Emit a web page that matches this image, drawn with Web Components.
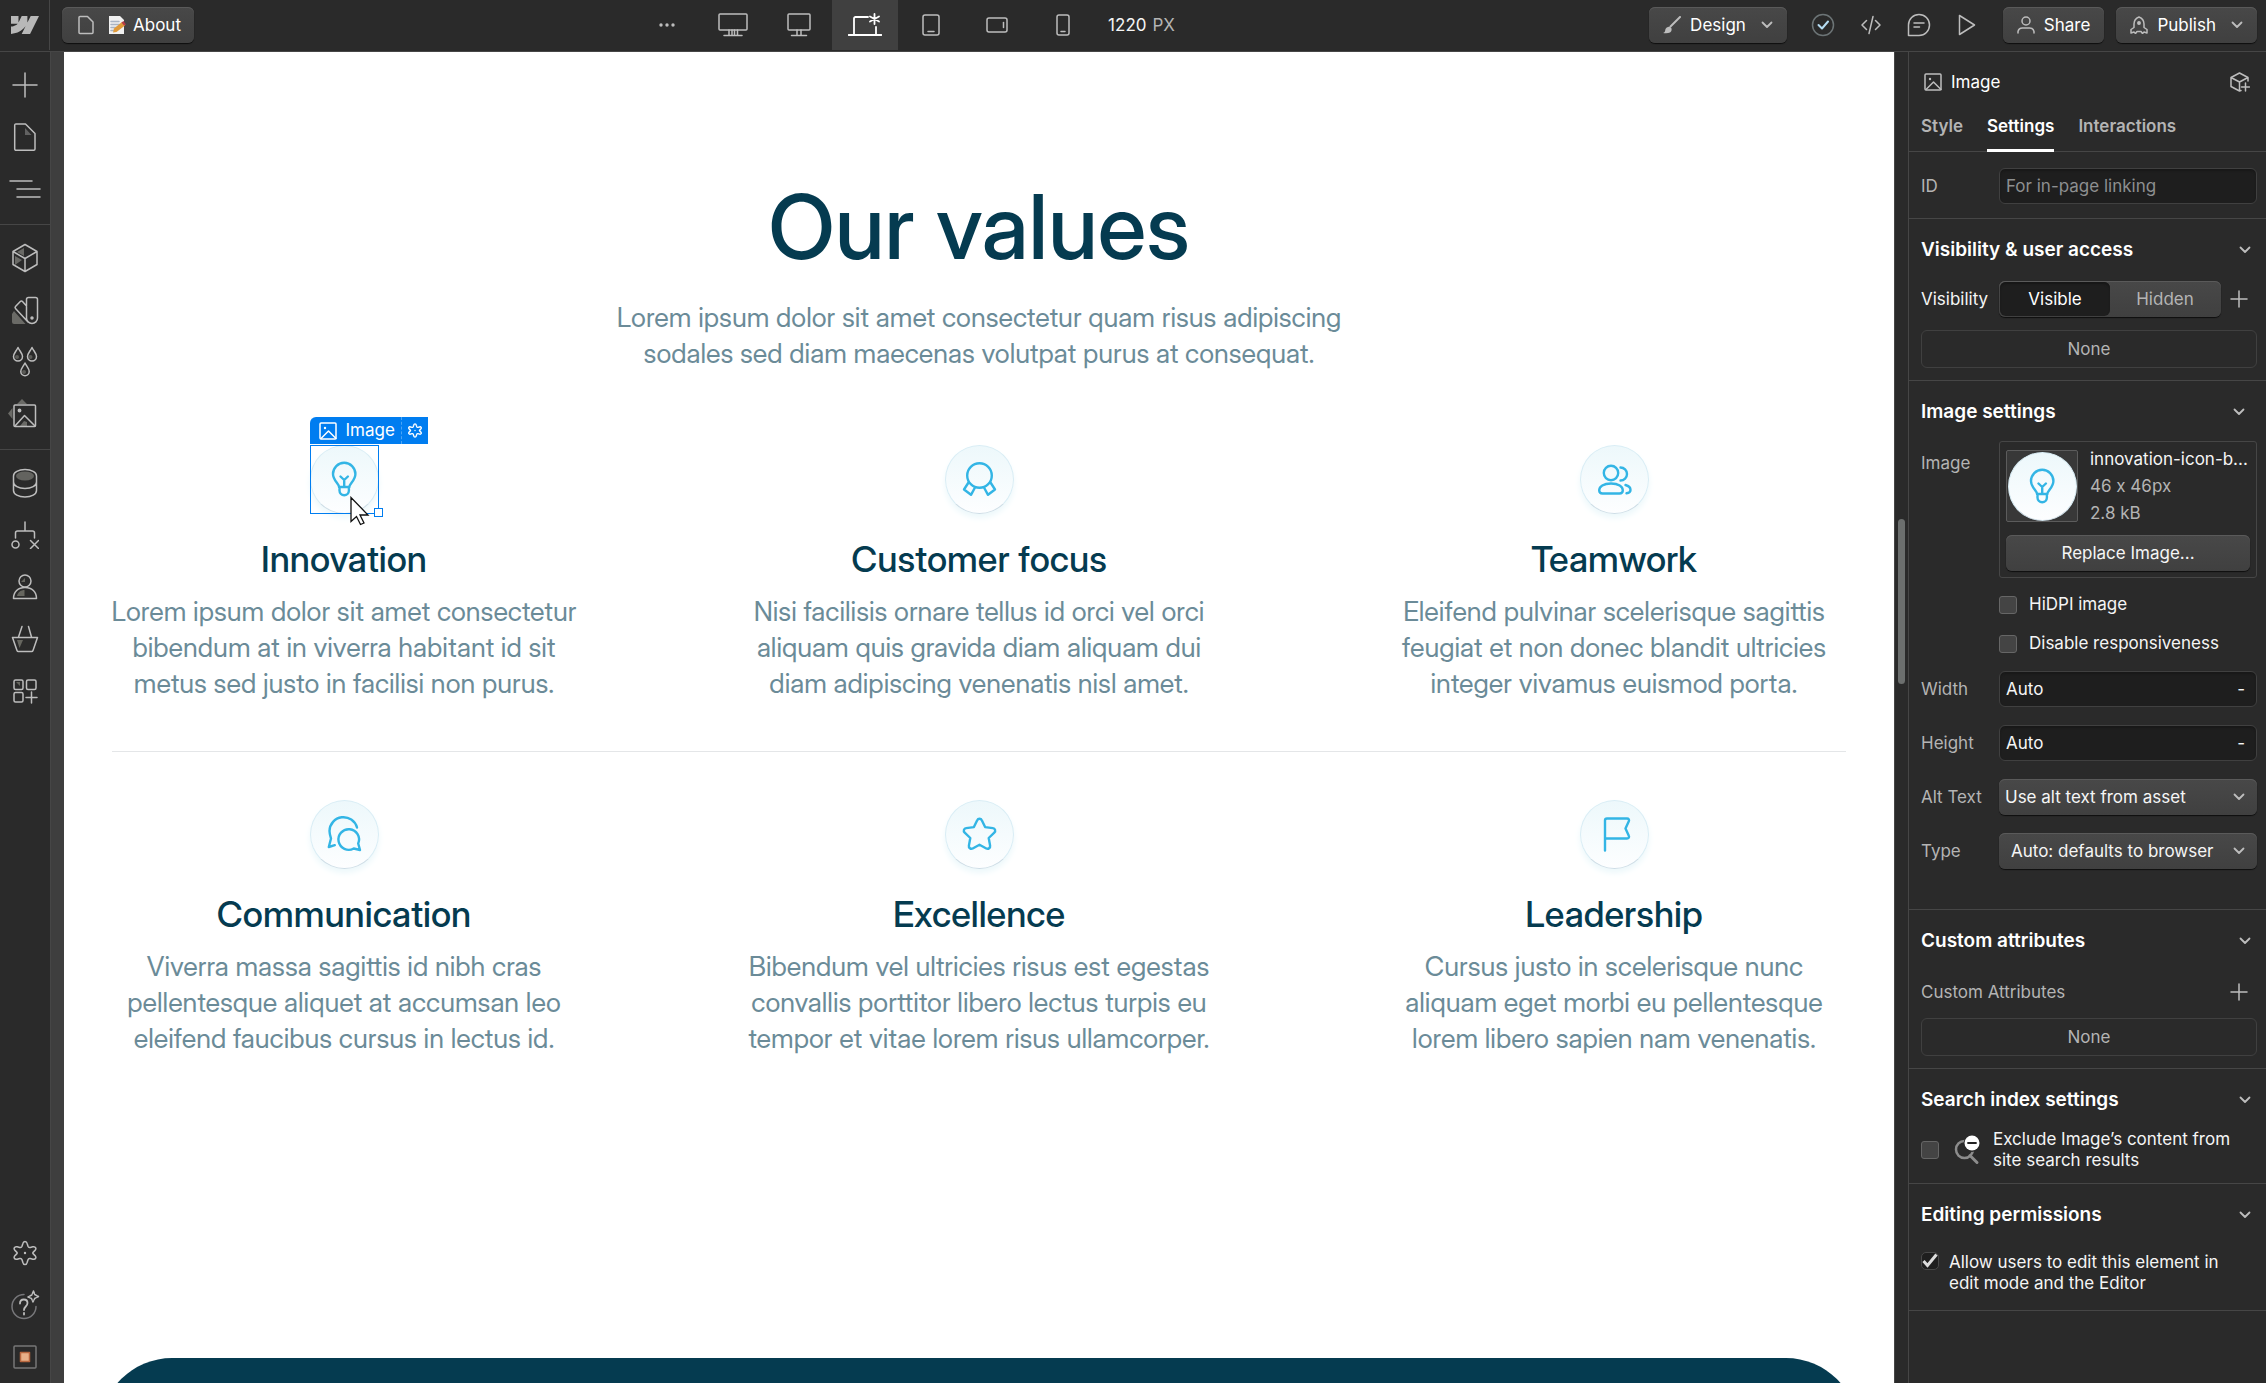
<!DOCTYPE html>
<html lang="en">
<head>
<meta charset="utf-8">
<meta name="viewport" content="width=device-width, initial-scale=1">
<title>About - Designer</title>
<style>
  :root {
    --bg: #2a2a2a;
    --bg-input: #1e1e1e;
    --line: #464646;
    --text: #f5f5f5;
    --muted: #b4b4b4;
    --icon: #bdbdbd;
    --button: linear-gradient(#484848, #404040);
    --button-shadow: inset 0 1px 0 #5a5a5a, 0 1px 1px #0e0e0e;
    --navy: #053b50;
    --slate: #6b8b98;
    --sky: #33b5e5;
    --blue: #007df0;
    --display: "Inter Display", Inter, "Liberation Sans", sans-serif;
  }

  body {
    margin: 0;
    background: var(--bg);
    color: var(--text);
    font: 400 17px/21px Inter, "Liberation Sans", sans-serif;
  }
</style>
</head>
<body>
<designer-app></designer-app>

<script>
// name: [width, height, markup]
const ICONS = {
  logo: [28, 18, '<path transform="scale(1.167 1.2) translate(0 -4.515)" fill="currentColor" stroke="none" d="m24 4.515-7.658 14.97H9.149l3.205-6.204h-.144C9.566 16.713 5.621 18.973 0 19.485v-6.118s3.596-.213 5.71-2.435H0V4.515h6.417v5.278l.144-.001 2.622-5.277h4.854v5.244h.144l2.72-5.244H24Z"/>'],
  file: [18, 20, '<path d="M3 1.500h7.500L16 7v10.500a1 1 0 0 1-1 1H3a1 1 0 0 1-1-1v-15a1 1 0 0 1 1-1z"/>'],
  memo: [18, 20, '<path fill="#f1f1f1" stroke="none" d="M1 1h11l4 4v14H1z"/><path stroke="#a9b4c4" d="M3 6.500h8M3 9.500h10M3 12.500h6M3 15.500h3"/><path fill="#e09a3a" stroke="none" d="M5 17.500l1-4 8-6.500 3 3.500-8.500 6.500z"/><path fill="#b53a48" stroke="none" d="M13.500 7.500l2-1.500 2.500 3.500-2 1z"/>'],
  dots: [16, 4, '<g fill="currentColor" stroke="none"><circle cx="2" cy="2" r="1.700"/><circle cx="8" cy="2" r="1.700"/><circle cx="14" cy="2" r="1.700"/></g>'],
  desktopLarge: [30, 24, '<rect x="1" y="1" width="28" height="16" rx="1"/><path d="M11 17v5M14 17v5M16.500 17v5M19.500 17v5M6 22.500h18"/>'],
  desktop: [24, 24, '<rect x="1" y="1" width="22" height="16" rx="1"/><path d="M10 17v5M14 17v5M4.500 22.500h15"/>'],
  laptop: [34, 24, '<g stroke-width="1.800"><path d="M6 22V5.500A1.500 1.500 0 0 1 7.500 4H20M28 14v8M.500 22h33"/><path d="M26.500 1v10M22 3.500l9 5M31 3.500l-9 5"/></g>'],
  tablet: [18, 22, '<rect x="1" y="1" width="16" height="20" rx="2"/><path d="M6 17.500h6"/>'],
  phoneWide: [22, 16, '<rect x="1" y="1" width="20" height="14" rx="2"/><path d="M17.500 5.500v5"/>'],
  phone: [14, 22, '<rect x="1" y="1" width="12" height="20" rx="2"/><path d="M5 17.500h4"/>'],
  brush: [18, 18, '<path fill="currentColor" stroke="none" d="M0 17c2-.500 2-1.500 2.500-4A3.600 3.600 0 0 1 8 11.500a3.500 3.500 0 0 1-1 5C5 17.500 2 17.300 0 17z"/><path stroke-width="2" d="M7.500 10.500L17 1"/>'],
  chevron: [12, 8, '<path stroke-width="1.800" d="M1.500 1.500L6 6l4.500-4.500"/>'],
  check: [24, 24, '<circle cx="12" cy="12" r="10.500" stroke="#6c7476"/><path stroke="#b5dcf2" stroke-width="2" d="M7.500 12l3.500 3.500 6-7"/>'],
  code: [20, 20, '<path d="M5.500 5.500L1 10l4.500 4.500M14.500 5.500L19 10l-4.500 4.500M12 1.500L8 18.500"/>'],
  comment: [24, 24, '<path d="M1.500 22.500V12A10.500 10.500 0 1 1 12 22.500zM7 10h10M7 14h5.500"/>'],
  play: [18, 22, '<path d="M1.500 1.500v19L16.500 11z"/>'],
  person: [18, 18, '<circle cx="9" cy="5" r="4"/><path d="M1 17v-1.500A4.500 4.500 0 0 1 5.500 12h7a4.500 4.500 0 0 1 4.500 3.500V17"/>'],
  rocket: [18, 18, '<path d="M4 11.500V8c0-3.500 2.500-6 5-7 2.500 1 5 3.500 5 7v3.500l3 2v3.500l-3-1-1.500 1.500-1.500-2H7l-1.500 2L4 16l-3 1v-3.500z"/><circle cx="9" cy="7" r="1.200" fill="currentColor"/>'],
  add: [26, 26, '<path d="M13 1v24M1 13h24"/>'],
  plus: [18, 18, '<path d="M9 1v16M1 9h16"/>'],
  page: [24, 28, '<path fill="#626262" stroke="none" d="M12 5v7h6.500z"/><path d="M3 1h9.500L22 10.500V26a1.200 1.200 0 0 1-1.200 1.200H3A1.200 1.200 0 0 1 1.700 26V2.200A1.200 1.200 0 0 1 3 1z"/>'],
  navigator: [32, 20, '<path d="M1 2h22M8 10h23M8 18h23"/>'],
  cube: [28, 30, '<path fill="#6a6a66" stroke="none" d="M13 5v8L6 9zM4 13l7 4-7 5z"/><path d="M14 1.500l12 7v13l-12 7-12-7v-13zM2 8.500l12 7 12-7M14 15.500v13"/>'],
  swatches: [28, 30, '<path fill="#6a6a66" stroke="none" d="M1 19l2-3 11.500 13H3a2 2 0 0 1-2-2z"/><path d="M17.500 2.500h7a2 2 0 0 1 2 2V23a5.500 5.500 0 0 1-11 0V4.500a2 2 0 0 1 2-2zM15.500 11l-4-4.500a1.500 1.500 0 0 0-2.200 0L4.500 11.500a1.500 1.500 0 0 0 0 2L17 27"/><circle cx="21" cy="23" r="1" fill="currentColor"/>'],
  drops: [26, 32, '<g fill="#5c5c58" stroke="none"><circle cx="5" cy="11" r="2"/><circle cx="18.500" cy="11" r="2"/><circle cx="12" cy="26" r="2"/></g><path d="M6 1.500c2 4 4.500 6 4.500 9a4.500 4.500 0 0 1-9 0c0-3 2.500-5 4.500-9zM20 1.500c2 4 4.500 6 4.500 9a4.500 4.500 0 0 1-9 0c0-3 2.500-5 4.500-9zM13 17c2 4 4.200 5.500 4.200 8.500a4.200 4.200 0 0 1-8.400 0c0-3 2.200-4.500 4.200-8.500z"/>'],
  assets: [34, 30, '<path fill="#6a6a66" stroke="none" d="M9 5l5-5 5 5zM4.500 9L0 14.500l4.500 5.500zM12 27l4-5 3 1v4z"/><rect x="6" y="6" width="21.500" height="21.500" rx="1"/><path d="M7 27l9.500-10.500L27 27"/><circle cx="11.500" cy="11.500" r="1.200" fill="currentColor"/>'],
  database: [26, 30, '<ellipse cx="13" cy="8" rx="9" ry="4.500" fill="#63635f" stroke="none"/><path d="M1.500 8v14.500c0 3.800 5 6.500 11.500 6.500s11.500-2.700 11.500-6.500V8M1.500 8c0-3.800 5-6.500 11.500-6.500S24.500 4.200 24.500 8M1.500 14c0 3.800 5 6.500 11.500 6.500s11.500-2.700 11.500-6.500"/>'],
  logic: [28, 28, '<path d="M14 1v9M4.500 17v-5a2 2 0 0 1 2-2h15a2 2 0 0 1 2 2v5M19.500 19.500l8 8M27.500 19.500l-8 8"/><circle cx="4.500" cy="23.500" r="3.500"/>'],
  user: [26, 26, '<path fill="#66665f" stroke="none" d="M5 22c1-4 4-6 7.500-6v6zM9 8l4-4v4z"/><circle cx="13" cy="7" r="6"/><path d="M1.500 24.500C1.500 18 6 13.500 13 13.500S24.500 18 24.500 24.500z"/>'],
  basket: [28, 28, '<path fill="#66665f" stroke="none" d="M6 15h6l-3.500 8z"/><path d="M1.500 12.500h25l-4.500 13a1.500 1.500 0 0 1-1.500 1H7.500a1.500 1.500 0 0 1-1.500-1zM7.500 12L11 1.500M20.500 12L17.500 1.500"/>'],
  apps: [26, 26, '<path fill="#66665f" stroke="none" d="M4 4h4v4z"/><rect x="2" y="2" width="9" height="9.500" rx="1.500"/><rect x="14.500" y="2" width="9.500" height="9.500" rx="1.500"/><rect x="2" y="14.500" width="9" height="9.500" rx="1.500"/><path d="M19.500 14v11M14 19.500h11"/>'],
  gear: [24, 26, '<path d="M12 1.500c1.500 0 1.900.900 2.200 2.200l.8 2.600c.400 1.200 1.200 1.500 2.300 1.200l2.500-.700c1.300-.300 2.400 0 2.900 1s.100 1.700-.700 2.600l-1.700 1.700c-.700.700-.700 1.100 0 1.800l1.700 1.700c.800.900 1.200 1.600.700 2.600s-1.600 1.300-2.900 1l-2.500-.700c-1.100-.300-1.900 0-2.300 1.200l-.8 2.600c-.300 1.300-.700 2.200-2.200 2.200s-1.900-.900-2.200-2.200L9 19.700c-.400-1.200-1.200-1.500-2.300-1.200l-2.500.700c-1.300.300-2.400 0-2.900-1s-.100-1.700.700-2.600l1.700-1.700c.700-.700.700-1.100 0-1.800L2 10.400c-.800-.9-1.200-1.600-.7-2.600s1.600-1.300 2.900-1l2.500.7C7.800 7.800 8.600 7.500 9 6.300l.8-2.600c.3-1.300.7-2.200 2.200-2.200z"/><circle cx="12" cy="13" r="1.200" fill="currentColor" stroke="none"/>'],
  help: [30, 30, '<path stroke="#77777a" d="M14 4.500a12 12 0 1 0 12 12"/><path stroke-width="1.800" d="M10 13.500c0-2.300 1.500-4 3.800-4s3.700 1.500 3.700 3.500c0 3.500-3.500 3.500-3.500 7M14 23v1.500"/><path d="M23.500 1l1.200 3.500L28.500 6.500l-3.800 2L23 12l-1.500-3.500L18 7l3.800-2z" stroke-dasharray="2.500 1.200"/>'],
  record: [24, 24, '<rect x="1" y="1" width="22" height="22" rx="1" stroke="#777"/><rect x="7.500" y="7.500" width="9" height="9" fill="#e8b088" stroke="#b8673f"/>'],
  image: [18, 18, '<rect x="1" y="1" width="16" height="16" rx="1"/><path d="M2 16.500l7.500-7.500L17 16.500"/><circle cx="6" cy="6" r="1.200" fill="currentColor" stroke="none"/>'],
  cubePlus: [20, 20, '<path d="M18 9V5.500L9.500 1 1 5.500v9L9.500 19l1.500-.500M1 5.500L9.500 10 18 5.500M9.500 10v9M15.500 11v8M11.500 15h8"/>'],
  searchMinus: [28, 30, '<circle cx="11.500" cy="14.500" r="8.500" stroke="#8c8c8c" stroke-width="2.500"/><path stroke="#8c8c8c" stroke-width="3" d="M17 20.500l7 7"/><circle cx="19" cy="8.500" r="8.500" fill="#2a2a2a" stroke="none"/><circle cx="19" cy="8" r="7.500" fill="#fff" stroke="none"/><path stroke="#222" stroke-width="1.800" d="M15 8h8"/>'],
  cursor: [22, 30, '<path fill="#fff" stroke="#111" stroke-width="1.300" stroke-linejoin="miter" d="M2 1.500v24l5.500-5 4 8 3.500-1.500-4-8h8z"/>']
};

// Glyphs inside the round badges, drawn in a 69px circle
const GLYPHS = {
  bulb: '<path d="M29 42c0-3.500-6-6.500-6-13a11.200 11.200 0 0 1 22.400 0c0 6.500-6 9.500-6 13zM29.500 42.500v3a4.700 4.700 0 0 0 9.400 0v-3M30.500 31.500l3.700 3.500 3.700-3.500M34.200 35v7"/>',
  award: '<circle cx="34.500" cy="30.500" r="12.300"/><path d="M23.500 37.500L19 44.500l7 5.300 4-7.300M45.500 37.500l4.500 7-7 5.300-4-7.300"/>',
  team: '<circle cx="31" cy="28" r="7.200"/><path d="M40.500 22.500a6.500 6.500 0 0 1 0 13M31 38.500c7.500 0 11.800 3 11.800 6.800 0 2-1.300 3.200-3.300 3.200h-17c-2 0-3.300-1.200-3.300-3.200 0-3.800 4.300-6.800 11.800-6.800zM45.500 40c3 .8 5 2.800 5 5 0 1.800-1.500 3-4 3.300"/>',
  chat: '<path d="M47 27.500A14 14 0 0 0 19.500 31c0 2.500.8 5 1.500 7.500L18.800 47l6-1.800"/><path d="M50 50l-1.800-6.500a10.300 10.300 0 1 0-4.500 5z"/>',
  star: '<path d="M32.200 20.200c.9-2 3.700-2 4.600 0l3.300 6.900 7.700 1c2.300.3 3.200 3 1.500 4.600l-5.600 5.300 1.400 7.600c.4 2.200-1.800 3.900-3.800 2.900l-6.800-3.700-6.800 3.700c-2 1-4.200-.7-3.800-2.900l1.400-7.600-5.600-5.300c-1.700-1.600-.8-4.300 1.500-4.600l7.700-1z"/>',
  flag: '<path d="M25 50.500v-30a2 2 0 0 1 2-2h20c1.700 0 2.500 1.400 1.800 2.800L45.500 28.500l3.300 7.200c.7 1.400-.1 2.800-1.800 2.800H25"/>'
};

const icon = (name) => {
  const [w, h, markup] = ICONS[name];
  return `<svg width="${w}" height="${h}" viewBox="0 0 ${w} ${h}" fill="none" stroke="currentColor" stroke-width="1.5" stroke-linecap="round" stroke-linejoin="round" aria-hidden="true">${markup}</svg>`;
};

const glyph = (name) =>
  `<svg viewBox="0 0 69 69" fill="none" stroke="#33b5e5" stroke-width="2.4" stroke-linecap="round" stroke-linejoin="round" aria-hidden="true">${GLYPHS[name]}</svg>`;

const BASE = `
  :host, *, *::before, *::after { box-sizing: border-box; }
  svg { display: block; flex: none; }
  button, input, select { font: inherit; color: inherit; margin: 0; padding: 0; border: 0; background: none; }
  button { cursor: pointer; }
  .raised { background: var(--button); box-shadow: var(--button-shadow); border-radius: 6px; }
`;

class BaseElement extends HTMLElement {
  constructor() {
    super();
    this.attachShadow({ mode: 'open' });
  }

  connectedCallback() {
    this.shadowRoot.innerHTML = `<style>${BASE}${this.styles()}</style>${this.template()}`;
  }

  styles() { return ''; }
  template() { return '<slot></slot>'; }
}

class IconButton extends BaseElement {
  styles() {
    return `
      :host { display: flex; width: 48px; height: 52px; color: var(--icon); }
      :host([active]) { color: #fff; background: #404040; }
      button { flex: 1; display: flex; align-items: center; justify-content: center; }
    `;
  }

  template() {
    return `<button type="button" aria-label="${this.getAttribute('label')}">${icon(this.getAttribute('icon'))}</button>`;
  }
}

class MenuButton extends BaseElement {
  styles() {
    return `
      :host { display: block; }
      button { display: flex; align-items: center; gap: 9px; height: 36px; padding: 0 14px; color: var(--icon); }
      span { color: #fff; }
      .caret { margin-left: 6px; }
    `;
  }

  template() {
    return `
      <button type="button" class="raised">
        ${icon(this.getAttribute('icon'))}
        <span><slot></slot></span>
        ${this.hasAttribute('menu') ? `<div class="caret">${icon('chevron')}</div>` : ''}
      </button>
    `;
  }
}

class TopBar extends BaseElement {
  styles() {
    return `
      :host { display: flex; justify-content: space-between; align-items: flex-start; height: 52px; border-bottom: 1px solid var(--line); background: var(--bg); }
      .group { display: flex; align-items: center; height: 50px; }
      .home { display: flex; align-items: center; justify-content: center; width: 50px; height: 50px; border-right: 1px solid var(--line); color: #b8b8b8; }
      .crumb { display: flex; align-items: center; gap: 13px; height: 36px; margin-left: 12px; padding: 0 13px 0 15px; color: var(--icon); }
      .crumb span { display: flex; align-items: center; gap: 7px; color: #fff; }
      .devices icon-button { width: 66px; height: 50px; }
      .size { display: flex; gap: 6px; padding: 0 34px 0 12px; }
      .size span { color: var(--muted); }
      .actions { gap: 12px; padding-right: 9px; }
      .tools { display: flex; }
    `;
  }

  template() {
    return `
      <div class="group">
        <a class="home" href="#" aria-label="Home">${icon('logo')}</a>
        <button type="button" class="crumb raised">${icon('file')}<span>${icon('memo')}About</span></button>
      </div>
      <div class="group devices">
        <icon-button icon="dots" label="More breakpoints"></icon-button>
        <icon-button icon="desktopLarge" label="Large desktop"></icon-button>
        <icon-button icon="desktop" label="Desktop"></icon-button>
        <icon-button icon="laptop" label="Base breakpoint" active></icon-button>
        <icon-button icon="tablet" label="Tablet"></icon-button>
        <icon-button icon="phoneWide" label="Mobile landscape"></icon-button>
        <icon-button icon="phone" label="Mobile portrait"></icon-button>
        <div class="size">1220 <span>PX</span></div>
      </div>
      <div class="group actions">
        <menu-button icon="brush" menu>Design</menu-button>
        <div class="tools">
          <icon-button icon="check" label="Saved"></icon-button>
          <icon-button icon="code" label="Export code"></icon-button>
          <icon-button icon="comment" label="Comments"></icon-button>
          <icon-button icon="play" label="Preview"></icon-button>
        </div>
        <menu-button icon="person">Share</menu-button>
        <menu-button icon="rocket" menu>Publish</menu-button>
      </div>
    `;
  }
}

class SideRail extends BaseElement {
  styles() {
    return `
      :host { display: flex; flex-direction: column; flex: none; width: 51px; border-right: 1px solid var(--line); background: var(--bg); }
      nav { padding: 7px 0 9px; border-bottom: 1px solid var(--line); }
      nav:first-child { padding-top: 6px; }
      nav.last { border: 0; }
      icon-button { width: 50px; }
      .bottom { margin-top: auto; }
    `;
  }

  template() {
    return `
      <nav>
        <icon-button icon="add" label="Add"></icon-button>
        <icon-button icon="page" label="Pages"></icon-button>
        <icon-button icon="navigator" label="Navigator"></icon-button>
      </nav>
      <nav>
        <icon-button icon="cube" label="Components"></icon-button>
        <icon-button icon="swatches" label="Variables"></icon-button>
        <icon-button icon="drops" label="Style selectors"></icon-button>
        <icon-button icon="assets" label="Assets"></icon-button>
      </nav>
      <nav class="last">
        <icon-button icon="database" label="CMS"></icon-button>
        <icon-button icon="logic" label="Logic"></icon-button>
        <icon-button icon="user" label="Users"></icon-button>
        <icon-button icon="basket" label="Ecommerce"></icon-button>
        <icon-button icon="apps" label="Apps"></icon-button>
      </nav>
      <div class="bottom">
        <icon-button icon="gear" label="Settings"></icon-button>
        <icon-button icon="help" label="Help"></icon-button>
        <icon-button icon="record" label="Record"></icon-button>
      </div>
    `;
  }
}

class RoundBadge extends BaseElement {
  styles() {
    return `
      :host { display: block; width: 69px; height: 69px; border-radius: 50%; border: 1px solid #d9edf5; border-bottom-color: #cddde6; background: linear-gradient(#edf8fb, #fdfeff); box-shadow: 0 4px 6px #ecf8fb; }
      svg { width: 69px; height: 69px; margin: -1px; }
    `;
  }

  template() {
    return glyph(this.getAttribute('glyph'));
  }
}

class ElementOutline extends BaseElement {
  styles() {
    return `
      :host { display: block; position: relative; }
      .frame { position: absolute; inset: 0; border: 1px solid var(--blue); }
      .tag { position: absolute; left: 0; bottom: 100%; display: flex; height: 27px; margin-bottom: 1px; border-radius: 6px 0 0 0; background: var(--blue); color: #fff; }
      .name { display: flex; align-items: center; gap: 9px; padding: 0 6px 0 9px; }
      .tag button { display: flex; align-items: center; justify-content: center; width: 27px; border-left: 1px dashed #4aa4f5; }
      .tag button svg { width: 14px; height: 15px; stroke-width: 2.5; }
      .handle { position: absolute; right: -4px; bottom: -3px; width: 9px; height: 9px; border: 1px solid var(--blue); background: #fff; }
      .cursor { position: absolute; left: 39px; top: 51px; }
    `;
  }

  template() {
    return `
      <slot></slot>
      <div class="frame"></div>
      <div class="tag">
        <div class="name">${icon('image')}Image</div>
        <button type="button" aria-label="Image settings">${icon('gear')}</button>
      </div>
      <div class="handle"></div>
      <div class="cursor">${icon('cursor')}</div>
    `;
  }
}

class ValueCard extends BaseElement {
  styles() {
    return `
      :host { display: flex; flex-direction: column; align-items: center; text-align: center; font-family: var(--display); }
      element-outline { font-family: Inter, "Liberation Sans", sans-serif; }
      h3 { margin: 23px 0 13px; color: var(--navy); font-weight: 500; font-size: 36px; line-height: 44px; }
      p { margin: 0 -6px; color: var(--slate); font-size: 27px; line-height: 36px; }
    `;
  }

  template() {
    const badge = `<round-badge glyph="${this.getAttribute('glyph')}"></round-badge>`;
    return `
      ${this.hasAttribute('selected') ? `<element-outline>${badge}</element-outline>` : badge}
      <h3>${this.getAttribute('heading')}</h3>
      <p><slot></slot></p>
    `;
  }
}

class PageCanvas extends BaseElement {
  styles() {
    return `
      :host { display: flex; flex-direction: column; flex: 1; min-width: 0; overflow: hidden; margin-left: 13px; background: #fff; }
      section { padding: 127px 48px 301px; }
      header { display: flex; flex-direction: column; align-items: center; text-align: center; margin-bottom: 73px; font-family: var(--display); }
      h2 { margin: 0 0 25px; color: var(--navy); font-weight: 500; font-size: 89px; line-height: 96px; }
      header p { max-width: 740px; margin: 0; color: var(--slate); font-size: 27px; line-height: 36px; }
      .row { display: grid; grid-template-columns: repeat(3, 1fr); gap: 171px; padding-bottom: 49px; }
      .row + .row { padding: 48px 0 0; border-top: 1px solid #e4e6e8; }
      footer { flex: none; height: 400px; margin: 0 36px; border-radius: 72px 72px 0 0; background: var(--navy); }
    `;
  }

  template() {
    return `
      <section>
        <header>
          <h2>Our values</h2>
          <p>Lorem ipsum dolor sit amet consectetur quam risus adipiscing sodales sed diam maecenas volutpat purus at consequat.</p>
        </header>
        <div class="row">
          <value-card glyph="bulb" heading="Innovation" selected>Lorem ipsum dolor sit amet consectetur bibendum at in viverra habitant id sit metus sed justo in facilisi non purus.</value-card>
          <value-card glyph="award" heading="Customer focus">Nisi facilisis ornare tellus id orci vel orci aliquam quis gravida diam aliquam dui diam adipiscing venenatis nisl amet.</value-card>
          <value-card glyph="team" heading="Teamwork">Eleifend pulvinar scelerisque sagittis feugiat et non donec blandit ultricies integer vivamus euismod porta.</value-card>
        </div>
        <div class="row">
          <value-card glyph="chat" heading="Communication">Viverra massa sagittis id nibh cras pellentesque aliquet at accumsan leo eleifend faucibus cursus in lectus id.</value-card>
          <value-card glyph="star" heading="Excellence">Bibendum vel ultricies risus est egestas convallis porttitor libero lectus turpis eu tempor et vitae lorem risus ullamcorper.</value-card>
          <value-card glyph="flag" heading="Leadership">Cursus justo in scelerisque nunc aliquam eget morbi eu pellentesque lorem libero sapien nam venenatis.</value-card>
        </div>
      </section>
      <footer></footer>
    `;
  }
}

class CanvasScrollbar extends BaseElement {
  styles() {
    return `
      :host { display: flex; flex-direction: column; align-items: center; flex: none; width: 14px; border-left: 1px solid var(--line); background: var(--bg); }
      .before { flex: 467; }
      .thumb { flex: 165; width: 7px; border-radius: 4px; background: #6c6f6e; }
      .after { flex: 699; }
    `;
  }

  template() {
    return '<div class="before"></div><div class="thumb"></div><div class="after"></div>';
  }
}

class PanelSection extends BaseElement {
  styles() {
    return `
      :host { display: block; padding: 0 9px 12px 12px; border-bottom: 1px solid var(--line); }
      h3 { display: flex; align-items: center; justify-content: space-between; height: 60px; margin: 0; padding: 2px 6px 0 0; color: #fff; font-weight: 600; font-size: 19px; line-height: 24px; }
      :host([inset]) h3 { padding-right: 12px; }
      h3 button { color: var(--icon); }
    `;
  }

  template() {
    const heading = this.getAttribute('heading');
    return `
      <h3>${heading}<button type="button" aria-label="Toggle ${heading.replace('&', 'and')}">${icon('chevron')}</button></h3>
      <slot></slot>
    `;
  }
}

const FIELD = `
  :host { display: grid; grid-template-columns: 78px minmax(0, 1fr); align-items: center; }
  label { color: var(--muted); }
  .box { display: flex; align-items: center; height: 36px; padding: 0 11px 0 6px; border: 1px solid #404040; border-radius: 6px; background: var(--bg-input); box-shadow: inset 0 2px 2px #191919; }
  input { flex: 1; min-width: 0; outline: 0; }
  input::placeholder { color: #8d8f90; opacity: 1; }
`;

class TextField extends BaseElement {
  styles() { return FIELD; }

  template() {
    const unit = this.getAttribute('unit');
    return `
      <label for="control">${this.getAttribute('label')}</label>
      <div class="box">
        <input id="control" type="text" value="${this.getAttribute('value') || ''}" placeholder="${this.getAttribute('placeholder') || ''}">
        ${unit ? `<button type="button" aria-label="Unit">${unit}</button>` : ''}
      </div>
    `;
  }
}

class SelectField extends BaseElement {
  styles() {
    return `${FIELD}
      .wrap { display: grid; grid-template-columns: minmax(0, 1fr); align-items: center; height: 36px; }
      select { grid-area: 1 / 1; width: 100%; height: 36px; padding: 0 30px 0 6px; appearance: none; outline: 0; }
      :host([indent]) select { padding-left: 12px; }
      svg { grid-area: 1 / 1; justify-self: end; margin-right: 12px; color: var(--icon); pointer-events: none; }
    `;
  }

  template() {
    return `
      <label for="control">${this.getAttribute('label')}</label>
      <div class="wrap raised">
        <select id="control"><option>${this.getAttribute('value')}</option></select>
        ${icon('chevron')}
      </div>
    `;
  }
}

class CheckField extends BaseElement {
  styles() {
    return `
      :host { display: block; }
      label { display: flex; align-items: center; gap: 12px; }
      :host([top]) label { align-items: flex-start; gap: 10px; }
      input { appearance: none; flex: none; width: 18px; height: 18px; border: 1px solid #666; border-radius: 3px; background: #444; }
      input:checked { border-color: #484848; border-radius: 5px; background: #1e1e1e; }
      .tick { display: grid; }
      .tick > * { grid-area: 1 / 1; }
      .tick svg { display: none; pointer-events: none; }
      input:checked + svg { display: block; }
      .lead { padding: 0 0 0 2px; }
    `;
  }

  template() {
    const lead = this.getAttribute('icon');
    return `
      <label>
        <span class="tick">
          <input type="checkbox" ${this.hasAttribute('checked') ? 'checked' : ''}>
          <svg width="18" height="18" viewBox="0 0 18 18" fill="none" stroke="#dcdcdc" stroke-width="3"><path d="M2.500 9l4 4.500L15.500 2.500"/></svg>
        </span>
        ${lead ? `<span class="lead">${icon(lead)}</span>` : ''}
        <span><slot></slot></span>
      </label>
    `;
  }
}

class VisibilityField extends BaseElement {
  styles() {
    return `
      :host { display: grid; grid-template-columns: 78px 1fr 36px; align-items: center; }
      .toggle { display: grid; grid-template-columns: 1fr 1fr; height: 36px; padding: 1px; }
      .toggle button { border-radius: 6px; color: var(--muted); }
      .toggle button[aria-pressed="true"] { background: var(--bg-input); box-shadow: inset 0 2px 2px #171717; color: #fff; }
      .add { display: flex; justify-content: center; color: var(--icon); }
    `;
  }

  template() {
    return `
      <span id="name">Visibility</span>
      <div class="toggle raised" role="group" aria-labelledby="name">
        <button type="button" aria-pressed="true">Visible</button>
        <button type="button" aria-pressed="false">Hidden</button>
      </div>
      <button type="button" class="add" aria-label="Add condition">${icon('plus')}</button>
    `;
  }
}

class EmptyBox extends BaseElement {
  styles() {
    return ':host { display: flex; align-items: center; justify-content: center; height: 38px; border: 1px solid #404040; border-radius: 6px; color: var(--muted); }';
  }
}

class ImageField extends BaseElement {
  styles() {
    return `
      :host { display: grid; grid-template-columns: 78px minmax(0, 1fr); }
      .label { padding-top: 12px; color: var(--muted); }
      .card { padding: 8px 6px 6px; border: 1px solid var(--line); border-radius: 3px; }
      .file { display: flex; gap: 12px; height: 72px; margin-bottom: 13px; }
      .thumb { display: flex; align-items: center; justify-content: center; flex: none; width: 72px; height: 72px; border: 1px solid #5c5c5c; border-radius: 2px; background: #383838; }
      .meta { min-width: 0; line-height: 27px; margin-top: -4px; color: var(--muted); font-variant-ligatures: no-contextual; }
      .meta div { overflow: hidden; text-overflow: ellipsis; white-space: nowrap; }
      .meta .name { color: var(--text); }
      round-badge { box-shadow: none; }
      .card button { width: 100%; height: 36px; }
    `;
  }

  template() {
    return `
      <div class="label">Image</div>
      <div class="card">
        <div class="file">
          <div class="thumb"><round-badge glyph="bulb"></round-badge></div>
          <div class="meta">
            <div class="name">innovation-icon-b...</div>
            <div>46 x 46px</div>
            <div>2.8 kB</div>
          </div>
        </div>
        <button type="button" class="raised">Replace Image...</button>
      </div>
    `;
  }
}

class SettingsPanel extends BaseElement {
  styles() {
    return `
      :host { display: block; flex: none; width: 358px; border-left: 1px solid var(--line); background: var(--bg); }
      .element { display: flex; align-items: center; gap: 9px; height: 54px; padding: 6px 16px 0 15px; color: var(--icon); }
      .element span { flex: 1; color: #fff; }
      .tabs { display: flex; gap: 24px; height: 46px; padding-left: 12px; border-bottom: 1px solid var(--line); }
      .tabs button { height: 46px; padding-bottom: 3px; border-bottom: 3px solid transparent; color: var(--muted); font-weight: 600; }
      .tabs button[aria-selected="true"] { border-color: #fff; color: #fff; }
      .id { padding: 16px 9px 14px 12px; border-bottom: 1px solid var(--line); }
      visibility-field { padding-top: 2px; }
      visibility-field + empty-box { margin-top: 13px; }
      .checks { display: grid; grid-auto-rows: 39px; align-items: center; padding: 7px 0 8px 78px; }
      .fields { display: grid; gap: 18px; padding-bottom: 28px; }
      .add { display: flex; align-items: center; justify-content: space-between; height: 44px; margin-bottom: 4px; padding-right: 9px; color: var(--muted); }
      .add button { color: var(--icon); }
      .permission { padding: 8px 0 4px; }
    `;
  }

  template() {
    return `
      <div class="element">${icon('image')}<span>Image</span><button type="button" aria-label="Create component">${icon('cubePlus')}</button></div>
      <div class="tabs" role="tablist">
        <button type="button" role="tab" aria-selected="false">Style</button>
        <button type="button" role="tab" aria-selected="true">Settings</button>
        <button type="button" role="tab" aria-selected="false">Interactions</button>
      </div>
      <div class="id"><text-field label="ID" placeholder="For in-page linking"></text-field></div>

      <panel-section heading="Visibility &amp; user access">
        <visibility-field></visibility-field>
        <empty-box>None</empty-box>
      </panel-section>

      <panel-section heading="Image settings" inset>
        <image-field></image-field>
        <div class="checks">
          <check-field>HiDPI image</check-field>
          <check-field>Disable responsiveness</check-field>
        </div>
        <div class="fields">
          <text-field label="Width" value="Auto" unit="-"></text-field>
          <text-field label="Height" value="Auto" unit="-"></text-field>
          <select-field label="Alt Text" value="Use alt text from asset"></select-field>
          <select-field label="Type" value="Auto: defaults to browser" indent></select-field>
        </div>
      </panel-section>

      <panel-section heading="Custom attributes">
        <div class="add">Custom Attributes<button type="button" aria-label="Add attribute">${icon('plus')}</button></div>
        <empty-box>None</empty-box>
      </panel-section>

      <panel-section heading="Search index settings">
        <check-field icon="searchMinus">Exclude Image’s content from<br>site search results</check-field>
      </panel-section>

      <panel-section heading="Editing permissions">
        <div class="permission"><check-field top checked>Allow users to edit this element in<br>edit mode and the Editor</check-field></div>
      </panel-section>
    `;
  }
}

class DesignerApp extends BaseElement {
  styles() {
    return `
      :host { display: flex; flex-direction: column; height: 100vh; overflow: hidden; }
      top-bar { flex: none; }
      main { display: flex; flex: 1; min-height: 0; background: #3e3e3e; }
    `;
  }

  template() {
    return `
      <top-bar></top-bar>
      <main>
        <side-rail></side-rail>
        <page-canvas></page-canvas>
        <canvas-scrollbar></canvas-scrollbar>
        <settings-panel></settings-panel>
      </main>
    `;
  }
}

customElements.define('icon-button', IconButton);
customElements.define('menu-button', MenuButton);
customElements.define('top-bar', TopBar);
customElements.define('side-rail', SideRail);
customElements.define('round-badge', RoundBadge);
customElements.define('element-outline', ElementOutline);
customElements.define('value-card', ValueCard);
customElements.define('page-canvas', PageCanvas);
customElements.define('canvas-scrollbar', CanvasScrollbar);
customElements.define('panel-section', PanelSection);
customElements.define('text-field', TextField);
customElements.define('select-field', SelectField);
customElements.define('check-field', CheckField);
customElements.define('visibility-field', VisibilityField);
customElements.define('empty-box', EmptyBox);
customElements.define('image-field', ImageField);
customElements.define('settings-panel', SettingsPanel);
customElements.define('designer-app', DesignerApp);
</script>
</body>
</html>
